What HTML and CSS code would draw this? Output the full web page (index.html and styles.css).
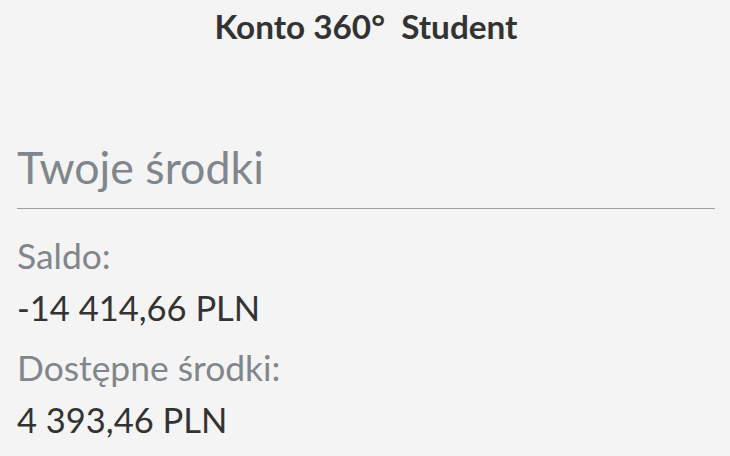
FILE: index.html
```html
<!DOCTYPE html>
<html lang="pl">
<head>
<meta charset="utf-8">
<link rel="stylesheet" href="styles.css">
</head>
<body>
<div class="page">
  <header class="top">Konto 360°&nbsp; Student</header>
  <section class="funds">
    <h2 class="funds-title">Twoje środki</h2>
    <div class="rows">
      <div class="row">
        <div class="label">Saldo:</div>
        <div class="value">-14 414,66 PLN</div>
      </div>
      <div class="row">
        <div class="label">Dostępne środki:</div>
        <div class="value">4 393,46 PLN</div>
      </div>
    </div>
  </section>
</div>
</body>
</html>
```
FILE: styles.css
```css
html, body {
  margin: 0;
  padding: 0;
  background: #f4f4f4;
}
body {
  font-family: Lato, "Open Sans", sans-serif;
  width: 730px;
  height: 456px;
  overflow: hidden;
}
.page {
  padding: 0 15px 0 17px;
}
.top {
  text-align: center;
  font-weight: 700;
  font-size: 33.3px;
  color: #333333;
  line-height: 50px;
  padding-top: 1px;
}
.funds {
  margin-top: 89px;
}
.funds-title {
  margin: 0;
  font-weight: 400;
  font-size: 44.7px;
  line-height: 54px;
  color: #80868b;
  padding-bottom: 14px;
  border-bottom: 1px solid #9ca0a4;
}
.rows {
  display: flex;
  flex-direction: column;
  gap: 8px;
  padding-top: 21px;
}
.row {
  display: flex;
  flex-direction: column;
}
.label {
  font-size: 35.4px;
  color: #80868b;
  line-height: 52px;
}
.value {
  font-size: 34.5px;
  color: #333333;
  line-height: 52px;
}
```
